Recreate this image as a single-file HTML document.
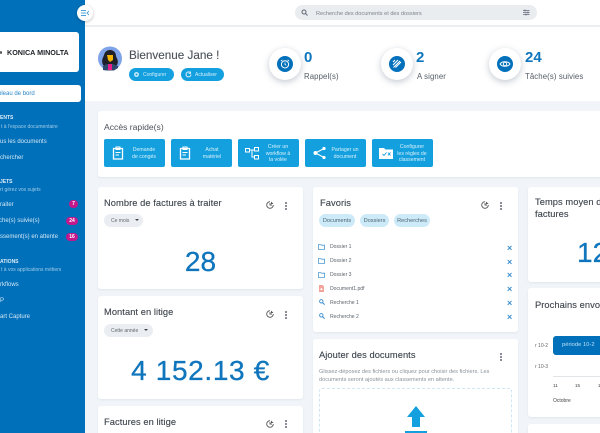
<!DOCTYPE html>
<html>
<head>
<meta charset="utf-8">
<style>
html,body{margin:0;padding:0;width:600px;height:433px;overflow:hidden}
body{position:relative;background:#f1f5f9;font-family:"Liberation Sans","Noto Sans CJK JP",sans-serif;color:#3c444c}
div,span,svg{position:absolute;white-space:nowrap;box-sizing:border-box}
#root{left:0;top:0;width:600px;height:433px;overflow:hidden;background:#f1f5f9}
#side{left:0;top:0;width:85px;height:433px;background:#0070ba;overflow:hidden}
.h{color:#dcecf7;font-size:5px;font-weight:bold}
.s{color:#9fcbe8;font-size:5px}
.m{color:#d5e8f5;font-size:6px}
.bd{background:#c2188b;color:#fff;font-size:5px;font-weight:bold;text-align:center;border-radius:5px;height:8px;line-height:9px}
.card{background:#fff;border-radius:3px;box-shadow:0 1px 2px rgba(40,60,90,.08);overflow:hidden}
.t{font-size:9.3px;color:#3c444c;letter-spacing:.07px;-webkit-text-stroke:.12px #3c444c}
.qb{top:139px;height:28px;width:61px;background:#14a0de;border-radius:2px}
.qb span{color:#d8f0fb;font-size:5.2px;text-align:center;line-height:6.7px;width:34px;display:block}
.pill{background:#14a0de;border-radius:7px;height:13px;top:68px;color:#d2eefa;font-size:5px;line-height:13px}
.pill span{top:1px}
.circ{width:32px;height:32px;top:48px;border-radius:50%;background:#fff;box-shadow:0 2px 7px rgba(40,60,90,.28)}
.ci{width:16px;height:16px;left:8px;top:8px;border-radius:50%;background:#0070ba}
.num{font-size:15px;color:#0f75bc;font-weight:bold;top:48px}
.lbl{font-size:7.8px;color:#555d65;top:71px;letter-spacing:.1px}
.big{color:#0f75bc;text-align:center}
.chip{background:#eaeef2;border-radius:7px;height:13px;color:#606870;font-size:5px;line-height:13px}
.chip span{top:1px}
.tag{top:214px;height:13px;background:#cdeaf8;border-radius:7px;color:#4c6470;font-size:5.6px;line-height:15px;text-align:center}
.fi{left:330px;font-size:5.1px;color:#5c646c}
.x{left:507px;font-size:9px;font-weight:bold;color:#3d8fd0;line-height:8px}
.dots{width:2px;height:8px;background:radial-gradient(circle at 1px 1px,#667 .9px,transparent 1px) 0 0/2px 3px}
</style>
</head>
<body>
<div id="root">
<!-- top bar -->
<div style="left:85px;top:0;width:515px;height:101px;background:#fff"></div>
<div style="left:85px;top:25px;width:515px;height:2px;background:#eceff2"></div>
<div style="left:295px;top:5px;width:242px;height:15px;border-radius:8px;background:#e9edf0"></div>
<svg style="left:301px;top:9px" width="7" height="7" viewBox="0 0 7 7"><circle cx="3" cy="3" r="2" fill="none" stroke="#667" stroke-width="1"/><path d="M4.5 4.5L6.5 6.5" stroke="#667"/></svg>
<div style="left:316px;top:10.5px;font-size:5.6px;color:#7c848c;line-height:7px">Recherche des documents et des dossiers</div>
<svg style="left:523px;top:9px" width="7" height="7" viewBox="0 0 7 7"><path d="M0 1.5H6.5M0 3.5H6.5M0 5.5H6.5M2 .5V2.5M5 2.5V4.5M3 4.5V6.5" stroke="#667" stroke-width=".8"/></svg>

<!-- sidebar -->
<div id="side">
<div style="left:-10px;top:32px;width:89px;height:40px;background:#fff;border-radius:3px"></div>
<div style="left:0;top:50.5px;width:2px;height:3px;background:#555;border-radius:50%"></div>
<div style="left:7px;top:46.5px;font-size:7.2px;font-weight:bold;color:#22252a;line-height:12px">KONICA MINOLTA</div>
<div style="left:-10px;top:85px;width:91px;height:17px;background:#fff;border-radius:3px"></div>
<div style="left:-2px;top:90px;font-size:6px;color:#2a86c8;line-height:8px">bleau de bord</div>
<div class="h" style="left:0;top:115px;line-height:7px">ENTS</div>
<div class="s" style="left:1px;top:123.5px;line-height:7px">t à l'espace documentaire</div>
<div class="m" style="left:0;top:138px;line-height:8px">us les documents</div>
<div class="m" style="left:0;top:154px;line-height:8px">chercher</div>
<div class="h" style="left:0;top:179px;line-height:7px">JETS</div>
<div class="s" style="left:0;top:187px;line-height:7px">rt gérez vos sujets</div>
<div class="m" style="left:0;top:201px;line-height:8px">raiter</div>
<div class="bd" style="left:69px;top:200px;width:9px">7</div>
<div class="m" style="left:-1px;top:217px;line-height:8px">che(s) suivie(s)</div>
<div class="bd" style="left:66px;top:216.5px;width:12px">24</div>
<div class="m" style="left:0;top:233px;line-height:8px">ssement(s) en attente</div>
<div class="bd" style="left:66px;top:232.5px;width:12px">16</div>
<div class="h" style="left:0;top:259px;line-height:7px">ATIONS</div>
<div class="s" style="left:1px;top:266.5px;line-height:7px">t à vos applications métiers</div>
<div class="m" style="left:0;top:281px;line-height:8px">rkflows</div>
<div class="m" style="left:0;top:297px;line-height:8px">P</div>
<div class="m" style="left:0;top:313px;line-height:8px">art Capture</div>
</div>
<div style="left:77px;top:5px;width:16px;height:16px;border-radius:50%;background:#fff;box-shadow:0 1px 3px rgba(0,0,0,.25)"></div>
<svg style="left:81px;top:10px" width="8" height="6" viewBox="0 0 8 6"><path d="M0 .5H5M0 3H5M0 5.5H5M8 1L6 3L8 5" fill="none" stroke="#4aa3dc" stroke-width=".9"/></svg>

<!-- welcome -->
<svg style="left:98px;top:46px" width="24" height="25" viewBox="0 0 24 25"><circle cx="12" cy="12.5" r="12" fill="#7fa3e8"/><path d="M5 19C3 14 5 12 6 9C7 5 10 4 12 4C15 4 18 6 18 10C19 13 21 15 19 19L15 21H9Z" fill="#20202a"/><path d="M9 9H15V14L12 16L10 14Z" fill="#f4b400"/><path d="M5 24V20L9 18H15L20 20V22L16 24.5H8Z" fill="#2d4a6e"/><path d="M10 18H14L14 24H10Z" fill="#e91e8c"/></svg>
<div style="left:129px;top:47px;font-size:11.7px;line-height:17px;color:#4a525a;-webkit-text-stroke:.12px #4a525a">Bienvenue Jane !</div>
<div class="pill" style="left:129px;width:45px"><span style="left:14px">Configurer</span></div>
<svg style="left:133px;top:71px" width="7" height="7" viewBox="0 0 7 7"><circle cx="3.5" cy="3.5" r="2.4" fill="#d2eefa"/><circle cx="3.5" cy="3.5" r="1" fill="#14a0de"/></svg>
<div class="pill" style="left:181px;width:43px"><span style="left:14px">Actualiser</span></div>
<svg style="left:185px;top:71px" width="7" height="7" viewBox="0 0 7 7"><path d="M6 3.5A2.5 2.5 0 1 1 5 1.4M5.5 .5V2.4H3.6" fill="none" stroke="#d2eefa"/></svg>

<div class="circ" style="left:269px"><div class="ci"></div>
<svg style="left:11px;top:11px" width="10" height="10" viewBox="0 0 10 10"><circle cx="5" cy="5.4" r="3.6" fill="none" stroke="#fff"/><path d="M5 3.5V5.5L6.3 6.3M.8 2.2L2.4 .8M9.2 2.2L7.6 .8" fill="none" stroke="#fff" stroke-width=".8"/></svg></div>
<div class="num" style="left:304px;line-height:20px">0</div>
<div class="lbl" style="left:304px;line-height:11px">Rappel(s)</div>
<div class="circ" style="left:381px"><div class="ci"></div>
<svg style="left:11px;top:11px" width="10" height="10" viewBox="0 0 10 10"><path d="M1.5 8.5L8 2M3.5 8.5L9 3M1 6L6 1M1 3L3 1" fill="none" stroke="#fff" stroke-width="1.1"/></svg></div>
<div class="num" style="left:416px;line-height:20px">2</div>
<div class="lbl" style="left:417px;line-height:11px">A signer</div>
<div class="circ" style="left:489px"><div class="ci"></div>
<svg style="left:10px;top:11px" width="12" height="10" viewBox="0 0 12 10"><path d="M1 5C3 2 9 2 11 5C9 8 3 8 1 5Z" fill="none" stroke="#fff"/><circle cx="6" cy="5" r="1.7" fill="none" stroke="#fff" stroke-width=".9"/></svg></div>
<div class="num" style="left:525px;line-height:20px">24</div>
<div class="lbl" style="left:525px;line-height:11px">Tâche(s) suivies</div>

<!-- quick access -->
<div class="card" style="left:98px;top:111px;width:600px;height:66px"></div>
<div style="left:104px;top:121px;font-size:8.6px;line-height:13px;color:#4a525a">Accès rapide(s)</div>
<div class="qb" style="left:104px"><span style="left:23px;top:8px">Demande<br>de congés</span></div>
<svg style="left:112px;top:146px" width="12" height="14" viewBox="0 0 12 14"><path d="M1.5 2.5H10.5V13H1.5Z" fill="none" stroke="#fff" stroke-width="1.3"/><path d="M4 1H8V3.5H4ZM3.5 6.5H8.5M3.5 9H7" fill="none" stroke="#fff"/></svg>
<div class="qb" style="left:171px"><span style="left:24px;top:8px">Achat<br>matériel</span></div>
<svg style="left:179px;top:146px" width="12" height="14" viewBox="0 0 12 14"><path d="M1.5 2.5H10.5V13H1.5Z" fill="none" stroke="#fff" stroke-width="1.3"/><path d="M4 1H8V3.5H4ZM3.5 6.5H8.5M3.5 9H7" fill="none" stroke="#fff"/></svg>
<div class="qb" style="left:238px"><span style="left:23px;top:5px">Créer un<br>workflow à<br>la volée</span></div>
<svg style="left:245px;top:147px" width="14" height="13" viewBox="0 0 14 13"><path d="M.5 1.5H4.5V5H.5ZM9.5 .5H13.5V4H9.5ZM9.5 8.5H13.5V12H9.5ZM4.5 3H9.5M7 3V10H9.5" fill="none" stroke="#fff"/></svg>
<div class="qb" style="left:305px"><span style="left:23px;top:8px">Partager un<br>document</span></div>
<svg style="left:313px;top:146px" width="13" height="14" viewBox="0 0 13 14"><path d="M11 2.5L2.5 7L11 11.5" fill="none" stroke="#fff"/><circle cx="11" cy="2.5" r="1.6" fill="#fff"/><circle cx="2.5" cy="7" r="2" fill="#fff"/><circle cx="11" cy="11.5" r="1.6" fill="#fff"/></svg>
<div class="qb" style="left:372px"><span style="left:23px;top:5px">Configurer<br>les règles de<br>classement</span></div>
<svg style="left:379px;top:148px" width="14" height="11" viewBox="0 0 14 11"><path d="M0 0H5L6.5 1.5H14V11H0Z" fill="#fff"/><path d="M3.5 6L5 7.5L7.5 4.5M9 4.5L11.5 7.5M11.5 4.5L9 7.5" stroke="#14a0de" fill="none" stroke-width=".9"/></svg>

<!-- column 1 -->
<div class="card" style="left:98px;top:187px;width:205px;height:102px"></div>
<div class="t" style="left:104px;top:196px;line-height:14px">Nombre de factures à traiter</div>
<svg style="left:266px;top:201px" width="8" height="8" viewBox="0 0 8 8"><path d="M4 .7A3.3 3.3 0 1 0 7.3 4M4 2V4H6" fill="none" stroke="#555" stroke-width=".9"/><path d="M5 .5L7.5 3H5Z" fill="#555"/></svg>
<div class="dots" style="left:285px;top:202px"></div>
<div class="chip" style="left:104px;top:214px;width:39px"><span style="left:7px">Ce mois</span></div>
<div style="left:135px;top:219px;border:2px solid transparent;border-top:2.5px solid #444;width:0;height:0"></div>
<div class="big" style="left:98px;top:243px;width:205px;font-size:28px;line-height:38px;-webkit-text-stroke:.3px #0f75bc">28</div>

<div class="card" style="left:98px;top:296px;width:205px;height:103px"></div>
<div class="t" style="left:104px;top:305px;line-height:14px">Montant en litige</div>
<svg style="left:266px;top:310px" width="8" height="8" viewBox="0 0 8 8"><path d="M4 .7A3.3 3.3 0 1 0 7.3 4M4 2V4H6" fill="none" stroke="#555" stroke-width=".9"/><path d="M5 .5L7.5 3H5Z" fill="#555"/></svg>
<div class="dots" style="left:285px;top:311px"></div>
<div class="chip" style="left:104px;top:324px;width:49px"><span style="left:7px">Cette année</span></div>
<div style="left:144px;top:329px;border:2px solid transparent;border-top:2.5px solid #444;width:0;height:0"></div>
<div class="big" style="left:98px;top:352px;width:205px;font-size:28px;line-height:38px;-webkit-text-stroke:.3px #0f75bc;letter-spacing:.65px">4 152.13 €</div>

<div class="card" style="left:98px;top:406px;width:205px;height:40px"></div>
<div class="t" style="left:104px;top:415px;line-height:14px">Factures en litige</div>
<svg style="left:266px;top:420px" width="8" height="8" viewBox="0 0 8 8"><path d="M4 .7A3.3 3.3 0 1 0 7.3 4M4 2V4H6" fill="none" stroke="#555" stroke-width=".9"/><path d="M5 .5L7.5 3H5Z" fill="#555"/></svg>
<div class="dots" style="left:285px;top:420px"></div>

<!-- column 2 -->
<div class="card" style="left:313px;top:187px;width:205px;height:145px"></div>
<div class="t" style="left:320px;top:196px;line-height:14px">Favoris</div>
<svg style="left:481px;top:201px" width="8" height="8" viewBox="0 0 8 8"><path d="M4 .7A3.3 3.3 0 1 0 7.3 4M4 2V4H6" fill="none" stroke="#555" stroke-width=".9"/><path d="M5 .5L7.5 3H5Z" fill="#555"/></svg>
<div class="dots" style="left:500px;top:202px"></div>
<div class="tag" style="left:319px;width:36px">Documents</div>
<div class="tag" style="left:360px;width:29px">Dossiers</div>
<div class="tag" style="left:394px;width:36px">Recherches</div>

<svg style="left:318px;top:244px" width="7" height="6" viewBox="0 0 7 6"><path d="M.4.6H2.8L3.4 1.2H6.6V5.4H.4Z" fill="none" stroke="#4b9ad6" stroke-width=".8"/></svg>
<div class="fi" style="top:244px;line-height:7px">Dossier 1</div><div class="x" style="top:243.5px">×</div>
<svg style="left:318px;top:258px" width="7" height="6" viewBox="0 0 7 6"><path d="M.4.6H2.8L3.4 1.2H6.6V5.4H.4Z" fill="none" stroke="#4b9ad6" stroke-width=".8"/></svg>
<div class="fi" style="top:258px;line-height:7px">Dossier 2</div><div class="x" style="top:257.5px">×</div>
<svg style="left:318px;top:272px" width="7" height="6" viewBox="0 0 7 6"><path d="M.4.6H2.8L3.4 1.2H6.6V5.4H.4Z" fill="none" stroke="#4b9ad6" stroke-width=".8"/></svg>
<div class="fi" style="top:272px;line-height:7px">Dossier 3</div><div class="x" style="top:270.5px">×</div>
<svg style="left:319px;top:285px" width="5" height="7" viewBox="0 0 5 7"><path d="M0 0H3.5L5 1.5V7H0Z" fill="#f3a29a"/><path d="M1 5L2.5 2.5L3.8 5Z" fill="#fff"/></svg>
<div class="fi" style="top:286px;line-height:7px">Document1.pdf</div><div class="x" style="top:284.5px">×</div>
<svg style="left:319px;top:299px" width="6" height="6" viewBox="0 0 6 6"><circle cx="2.3" cy="2.3" r="1.7" fill="none" stroke="#3a8fd0" stroke-width=".9"/><path d="M3.6 3.6L5.6 5.6" stroke="#3a8fd0"/></svg>
<div class="fi" style="top:299.5px;line-height:7px">Recherche 1</div><div class="x" style="top:298.5px">×</div>
<svg style="left:319px;top:313px" width="6" height="6" viewBox="0 0 6 6"><circle cx="2.3" cy="2.3" r="1.7" fill="none" stroke="#3a8fd0" stroke-width=".9"/><path d="M3.6 3.6L5.6 5.6" stroke="#3a8fd0"/></svg>
<div class="fi" style="top:313.5px;line-height:7px">Recherche 2</div><div class="x" style="top:312.5px">×</div>

<div class="card" style="left:313px;top:339px;width:205px;height:110px"></div>
<div class="t" style="left:319px;top:348px;line-height:14px">Ajouter des documents</div>
<div class="dots" style="left:500px;top:353px"></div>
<div style="left:319px;top:367.5px;width:190px;font-size:5.6px;line-height:8px;color:#8a929a">Glissez-déposez des fichiers ou cliquez pour choisir des fichiers. Les<br>documents seront ajoutés aux classements en attente.</div>
<div style="left:319px;top:388px;width:193px;height:60px;border:1px dashed #cfe6f4;border-radius:3px"></div>
<svg style="left:405px;top:406px" width="22" height="27" viewBox="0 0 22 27"><path d="M11 0L20 11H15V21H7V11H2Z" fill="#14a0de"/><rect x="0" y="25" width="22" height="2" fill="#14a0de"/></svg>

<!-- column 3 -->
<div class="card" style="left:528px;top:187px;width:120px;height:95px"></div>
<div class="t" style="left:535px;top:197px;line-height:11.5px">Temps moyen de<br>factures</div>
<div class="big" style="left:577px;top:234px;font-size:28px;line-height:38px;-webkit-text-stroke:.3px #0f75bc">12</div>

<div class="card" style="left:528px;top:288px;width:120px;height:129px"></div>
<div class="t" style="left:535px;top:298px;line-height:14px">Prochains envoi</div>
<div style="left:535px;top:343px;font-size:5px;line-height:7px;color:#666">r 10-2</div>
<div style="left:553px;top:336px;width:60px;height:19px;background:#0070ba;border-radius:3px"></div>
<div style="left:562px;top:342px;font-size:5.8px;line-height:7px;color:#bfe0f5">période 10-2</div>
<div style="left:535px;top:364px;font-size:5px;line-height:7px;color:#666">r 10-3</div>
<div style="left:553px;top:376px;width:50px;height:1px;background:#e2e5e8"></div>
<div style="left:553px;top:383px;font-size:4.6px;line-height:6px;color:#444">11</div>
<div style="left:575px;top:383px;font-size:4.6px;line-height:6px;color:#444">15</div>
<div style="left:598px;top:383px;font-size:4.6px;line-height:6px;color:#444">1</div>
<div style="left:553px;top:398px;font-size:5px;line-height:6px;color:#444">Octobre</div>

<div class="card" style="left:528px;top:424px;width:120px;height:30px"></div>
</div>
</body>
</html>
